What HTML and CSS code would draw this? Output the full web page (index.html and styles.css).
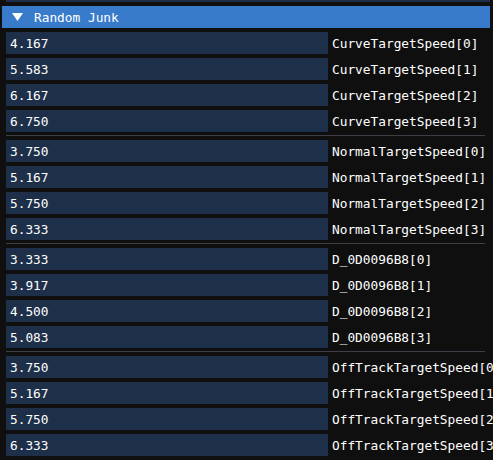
FILE: index.html
```html
<!DOCTYPE html>
<html>
<head>
<meta charset="utf-8">
<link rel="stylesheet" href="styles.css">
</head>
<body>
<div class="panel">
  <div class="prev-frame"></div>
  <div class="header">
    <svg class="arrow" width="11" height="8" viewBox="0 0 11 8"><polygon points="0,0 11,0 5.5,8" fill="#fff"/></svg>
    <span>Random Junk</span>
  </div>

  <div class="row"><div class="frame">4.167</div><span class="label">CurveTargetSpeed[0]</span></div>
  <div class="row"><div class="frame">5.583</div><span class="label">CurveTargetSpeed[1]</span></div>
  <div class="row"><div class="frame">6.167</div><span class="label">CurveTargetSpeed[2]</span></div>
  <div class="row"><div class="frame">6.750</div><span class="label">CurveTargetSpeed[3]</span></div>
  <div class="sep"></div>
  <div class="row"><div class="frame">3.750</div><span class="label">NormalTargetSpeed[0]</span></div>
  <div class="row"><div class="frame">5.167</div><span class="label">NormalTargetSpeed[1]</span></div>
  <div class="row"><div class="frame">5.750</div><span class="label">NormalTargetSpeed[2]</span></div>
  <div class="row"><div class="frame">6.333</div><span class="label">NormalTargetSpeed[3]</span></div>
  <div class="sep"></div>
  <div class="row"><div class="frame">3.333</div><span class="label">D_0D0096B8[0]</span></div>
  <div class="row"><div class="frame">3.917</div><span class="label">D_0D0096B8[1]</span></div>
  <div class="row"><div class="frame">4.500</div><span class="label">D_0D0096B8[2]</span></div>
  <div class="row"><div class="frame">5.083</div><span class="label">D_0D0096B8[3]</span></div>
  <div class="sep"></div>
  <div class="row"><div class="frame">3.750</div><span class="label">OffTrackTargetSpeed[0]</span></div>
  <div class="row"><div class="frame">5.167</div><span class="label">OffTrackTargetSpeed[1]</span></div>
  <div class="row"><div class="frame">5.750</div><span class="label">OffTrackTargetSpeed[2]</span></div>
  <div class="row"><div class="frame">6.333</div><span class="label">OffTrackTargetSpeed[3]</span></div>
</div>
</body>
</html>
```

FILE: styles.css
```css
html, body {
  margin: 0;
  padding: 0;
  background: #0f0f0f;
  overflow: hidden;
  width: 493px;
  height: 460px;
}

.panel {
  display: flex;
  flex-direction: column;
  gap: 4px;
  font-family: "DejaVu Sans Mono", "Liberation Mono", monospace;
  font-size: 12.8px;
  color: #ffffff;
}

/* tail of the widget above the collapsing header */
.prev-frame {
  height: 2px;
  width: 484px;
  margin-left: 6px;
  background: #1d2f49;
}

.header {
  display: flex;
  align-items: center;
  height: 22px;
  width: 488px;
  margin-left: 2px;
  background: #387bcb;
  box-sizing: border-box;
  padding-left: 10px;
}

.arrow {
  margin-right: 11px;
  margin-top: -1px;
}

.row {
  display: flex;
  align-items: center;
  height: 22px;
  white-space: nowrap;
}

.frame {
  width: 322px;
  height: 22px;
  margin-left: 6px;
  flex: none;
  box-sizing: border-box;
  padding-left: 4px;
  display: flex;
  align-items: center;
  background: #1d2f49;
}

.label {
  margin-left: 4px;
}

.sep {
  height: 1px;
  width: 479px;
  margin-left: 6px;
  margin-top: -1px;
  background: #3e3e47;
}
```
